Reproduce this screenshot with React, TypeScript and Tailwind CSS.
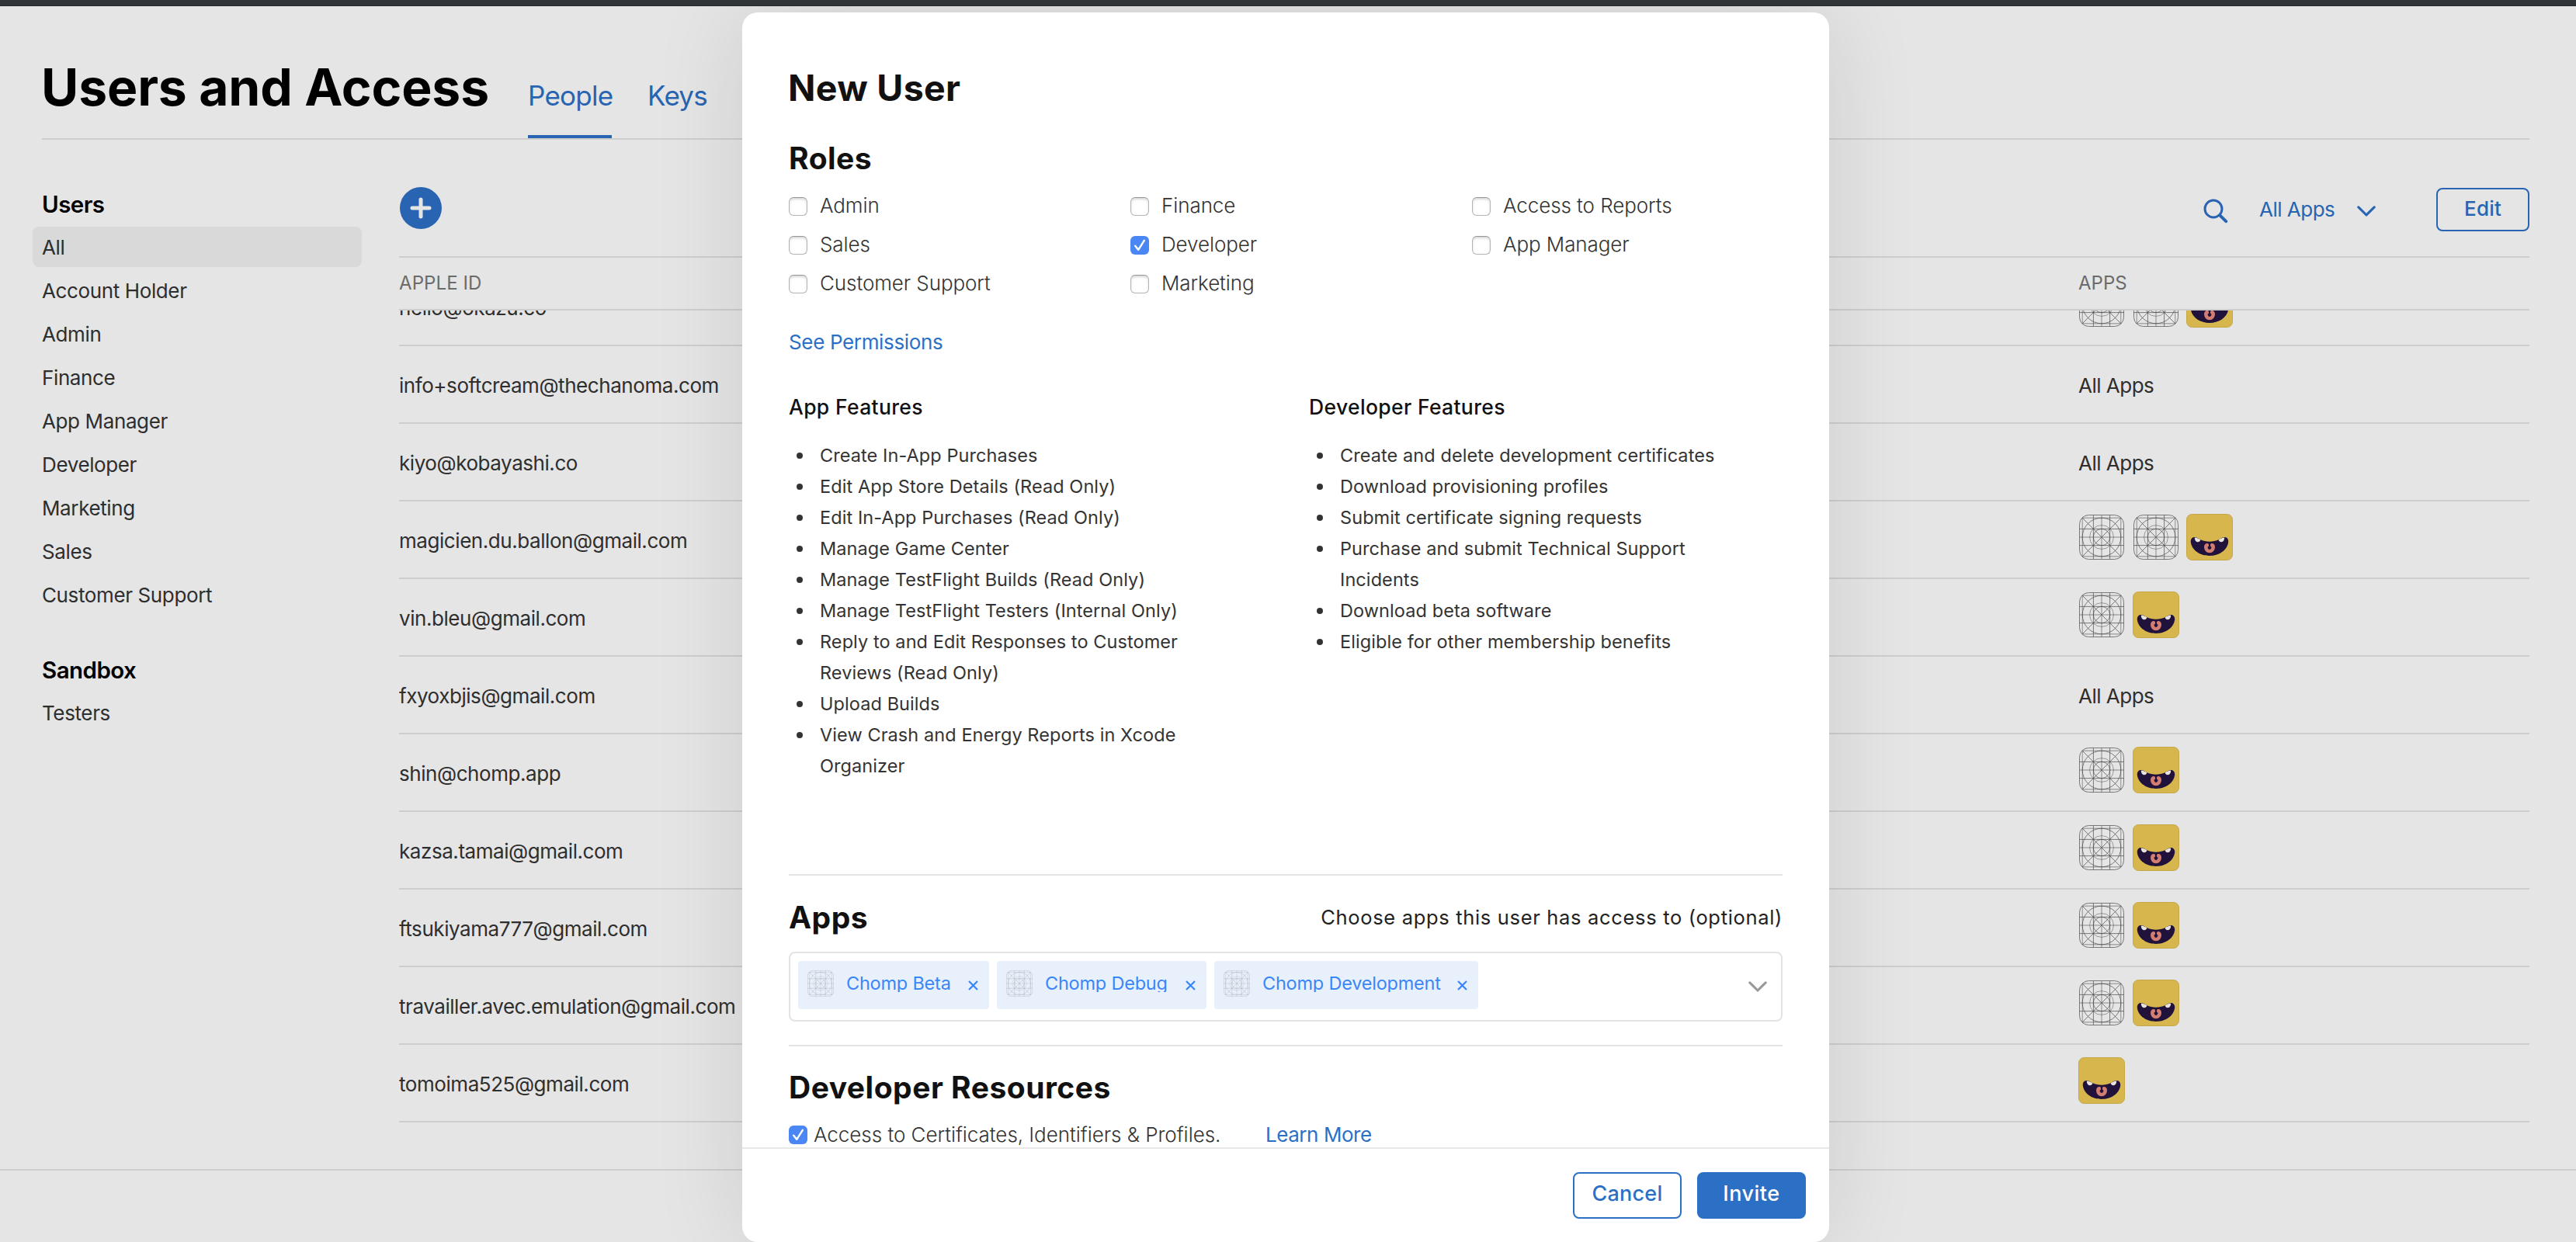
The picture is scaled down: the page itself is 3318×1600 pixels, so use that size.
import type { ReactNode } from 'react';

function GridIcon({ className }: { className: string }) {
  return (
    <svg viewBox="0 0 58 58" className={className} fill="none" stroke="#4a4a4a" strokeWidth="0.7">
      <rect x="0.5" y="0.5" width="57" height="57" rx="12" />
      <path d="M18.4 0.5v57M39.6 0.5v57M0.5 18.4h57M0.5 39.6h57" />
      <path d="M4.2 4.2l49.6 49.6M53.8 4.2L4.2 53.8" />
      <path d="M29 0.5v57M0.5 29h57" strokeWidth="1.5" strokeOpacity="0.4" />
      <path d="M4.3 4v50M53.7 4v50M4 4.3h50M4 53.7h50" strokeWidth="1.4" strokeOpacity="0.4" />
      <circle cx="29" cy="29" r="24.8" />
      <circle cx="29" cy="29" r="15.4" strokeOpacity="0.7" />
      <circle cx="29" cy="29" r="10.7" />
    </svg>
  );
}

function ChompIcon() {
  return (
    <svg viewBox="0 0 60 60" className="h-[60px] w-[60px]">
      <rect x="0.5" y="0.5" width="59" height="59" rx="7" fill="#d7b64e" stroke="#c5a649" />
      <path
        d="M10.5 30C7.3 30 5.5 33 5.8 36.3C7 47 18 54 30 54C42 54 53 47 54.2 36.3C54.5 33 52.7 30 49.5 30C46.3 30 44.5 31.8 42 33C34.5 36.6 25.5 36.6 18 33C15.5 31.8 13.7 30 10.5 30Z"
        fill="#20123a"
      />
      <path d="M10.8 30.5C13.6 30.3 15.7 31.9 18.4 33.3C18 35.2 16.6 36.3 14.9 36.3C12.4 36.3 10.8 33.8 10.8 30.5Z" fill="#e6e3e0" />
      <path d="M49.2 30.5C46.4 30.3 44.3 31.9 41.6 33.3C42 35.2 43.4 36.3 45.1 36.3C47.6 36.3 49.2 33.8 49.2 30.5Z" fill="#e6e3e0" />
      <path
        d="M27 38C24.6 38 23 39.8 23 42.5C23 47 26 50.2 30 50.2C34 50.2 37 47 37 42.5C37 39.8 35.4 38 33 38C31.9 38 31.2 38.6 31 39.6V41.6A2.2 2.2 0 1 1 29 41.6V39.6C28.8 38.6 28.1 38 27 38Z"
        fill="#d27d71"
      />
    </svg>
  );
}

function Chevron({ className }: { className: string }) {
  return (
    <svg viewBox="0 0 24 14" className={className} fill="none" stroke="currentColor" strokeWidth="3.1" strokeLinecap="round" strokeLinejoin="round">
      <path d="M1.8 1.8L12 12L22.2 1.8" />
    </svg>
  );
}

function Checkbox({ checked }: { checked?: boolean }) {
  if (checked) {
    return (
      <span className="flex h-6 w-6 shrink-0 items-center justify-center rounded-[6px] bg-[#4a86f4]">
        <svg viewBox="0 0 24 24" className="h-6 w-6" fill="none" stroke="#fff" strokeWidth="2.4" strokeLinecap="round" strokeLinejoin="round">
          <path d="M6.2 12.8L10.2 17.8L17.8 5.8" />
        </svg>
      </span>
    );
  }
  return (
    <span className="h-6 w-6 shrink-0 rounded-[6px] border border-[#b4b4b4] border-t-[#969696] bg-white shadow-[inset_0_2px_3px_rgba(0,0,0,0.16)]" />
  );
}

const users: { email: string; apps: string }[] = [
  { email: 'hello@okazu.co', apps: 'ggc' },
  { email: 'info+softcream@thechanoma.com', apps: 'all' },
  { email: 'kiyo@kobayashi.co', apps: 'all' },
  { email: 'magicien.du.ballon@gmail.com', apps: 'ggc' },
  { email: 'vin.bleu@gmail.com', apps: 'gc' },
  { email: 'fxyoxbjis@gmail.com', apps: 'all' },
  { email: 'shin@chomp.app', apps: 'gc' },
  { email: 'kazsa.tamai@gmail.com', apps: 'gc' },
  { email: 'ftsukiyama777@gmail.com', apps: 'gc' },
  { email: 'travailler.avec.emulation@gmail.com', apps: 'gc' },
  { email: 'tomoima525@gmail.com', apps: 'c' },
];

const sidebar = ['All', 'Account Holder', 'Admin', 'Finance', 'App Manager', 'Developer', 'Marketing', 'Sales', 'Customer Support'];

const roles: { name: string; checked?: boolean }[] = [
  { name: 'Admin' },
  { name: 'Finance' },
  { name: 'Access to Reports' },
  { name: 'Sales' },
  { name: 'Developer', checked: true },
  { name: 'App Manager' },
  { name: 'Customer Support' },
  { name: 'Marketing' },
];

const appFeatures = [
  'Create In-App Purchases',
  'Edit App Store Details (Read Only)',
  'Edit In-App Purchases (Read Only)',
  'Manage Game Center',
  'Manage TestFlight Builds (Read Only)',
  'Manage TestFlight Testers (Internal Only)',
  'Reply to and Edit Responses to Customer Reviews (Read Only)',
  'Upload Builds',
  'View Crash and Energy Reports in Xcode Organizer',
];

const developerFeatures = [
  'Create and delete development certificates',
  'Download provisioning profiles',
  'Submit certificate signing requests',
  'Purchase and submit Technical Support Incidents',
  'Download beta software',
  'Eligible for other membership benefits',
];

const chips = [
  { name: 'Chomp Beta', width: 'w-[246px]' },
  { name: 'Chomp Debug', width: 'w-[270px]' },
  { name: 'Chomp Development', width: 'w-[340px]' },
];

function SidebarItem({ label, active }: { label: string; active?: boolean }) {
  return (
    <li
      className={
        active
          ? 'h-[52px] rounded-lg bg-[#d9d9d9] pl-3 text-[26px] leading-[53px] tracking-[-0.38px] text-[#2e2e2e]'
          : 'h-[52px] pl-3 text-[26px] leading-[53px] tracking-[-0.38px] text-[#2e2e2e]'
      }
    >
      {label}
    </li>
  );
}

function UserRow({ email, apps }: { email: string; apps: string }) {
  return (
    <div className="flex h-[100px] shrink-0 border-b-2 border-[#cdcdcd] text-[26px] leading-[40px] text-[#2e2e2e]">
      <div className="w-[2163px] pt-[31px] tracking-[-0.44px]">{email}</div>
      {apps === 'all' ? (
        <div className="pt-[31px] tracking-[-0.5px]">All Apps</div>
      ) : (
        <div className="flex gap-[9.5px] pt-4">
          {apps.split('').map((kind, i) =>
            kind === 'g' ? (
              <span key={i} className="flex h-[60px] w-[60px] items-center justify-center">
                <GridIcon className="h-[58px] w-[58px]" />
              </span>
            ) : (
              <ChompIcon key={i} />
            ),
          )}
        </div>
      )}
    </div>
  );
}

function FeatureList({ title, items }: { title: string; items: string[] }) {
  return (
    <div>
      <h4 className="text-[26.5px] font-medium leading-[40px] tracking-[0.35px] text-[#111]">{title}</h4>
      <ul className="mt-[23px]">
        {items.map((item) => (
          <li key={item} className="flex">
            <span className="ml-[10px] mr-[22px] mt-4 h-2 w-2 shrink-0 rounded-full bg-[#333]" />
            <span className="w-[510px] text-[23.5px] leading-[40px] tracking-[0.08px] text-[#333]">{item}</span>
          </li>
        ))}
      </ul>
    </div>
  );
}

function SectionTitle({ children }: { children: ReactNode }) {
  return <h3 className="text-[39px] font-bold leading-[48px] tracking-[0.5px] text-[#111]">{children}</h3>;
}

export default function App() {
  return (
    <div className="relative flex h-[1600px] w-full flex-col overflow-hidden bg-[#e5e5e5] font-[Inter,'Liberation_Sans',sans-serif]">
      <div className="relative z-20 h-2 shrink-0 border-b border-[#24282a] bg-[#313538]" />

      <header className="ml-[54px] mr-[60px] flex h-[172px] shrink-0 items-start border-b-2 border-[#cdcdcd]">
        <h1 className="-ml-px mt-16 w-[627px] text-[66px] font-bold leading-[80px] tracking-[-0.15px] text-black">Users and Access</h1>
        <nav className="mt-[93px] flex h-[77px] gap-[46px] text-[35px] leading-[44px] tracking-[-0.75px] text-[#2864b1]">
          <a className="w-[108px] border-b-4 border-[#2864b1]">People</a>
          <a>Keys</a>
        </nav>
      </header>

      <main className="flex shrink-0">
        <aside className="ml-[42px] w-[424px] pt-[63px]">
          <h2 className="pl-3 text-[29.5px] font-semibold leading-[40px] tracking-[-0.55px] text-black">Users</h2>
          <ul className="mt-[9px] flex flex-col gap-1">
            {sidebar.map((label) => (
              <SidebarItem key={label} label={label} active={label === 'All'} />
            ))}
          </ul>
          <h2 className="mt-[51px] pl-3 text-[29.5px] font-semibold leading-[40px] tracking-[-0.55px] text-black">Sandbox</h2>
          <ul className="mt-[9px]">
            <SidebarItem label="Testers" />
          </ul>
        </aside>

        <section className="ml-12 mr-[60px] flex-1">
          <div className="flex h-[150px] items-start justify-between pt-[61px]">
            <button className="ml-px flex h-[54px] w-[54px] items-center justify-center rounded-full bg-[#2864b1]">
              <svg viewBox="0 0 28 28" className="h-7 w-7" stroke="#e5e5e5" strokeWidth="5" strokeLinecap="round">
                <path d="M14 3v22M3 14h22" />
              </svg>
            </button>
            <div className="flex h-[58px] items-center text-[#2864b1]">
              <svg viewBox="0 0 32 32" className="mr-[40px] mt-1 h-8 w-8" fill="none" stroke="currentColor" strokeLinecap="round">
                <circle cx="13" cy="13" r="11" strokeWidth="3" />
                <path d="M21.3 21.3L29.2 29.2" strokeWidth="4" />
              </svg>
              <span className="w-[126px] text-[26px] leading-[40px] tracking-[-0.5px]">All Apps</span>
              <Chevron className="mr-[78px] mt-1 h-[14px] w-6" />
              <button className="h-[56px] w-[120px] rounded-lg border-2 border-[#2864b1] pb-[3px] text-[26px] font-medium tracking-[0.2px]">
                Edit
              </button>
            </div>
          </div>

          <div className="flex h-[70px] border-y-2 border-[#cdcdcd] text-[24px] leading-[66px] text-[#6b6b6b]">
            <span className="w-[2163px] tracking-[0.1px]">APPLE ID</span>
            <span>APPS</span>
          </div>

          <div className="flex h-[1046px] flex-col justify-end overflow-hidden">
            {users.map((user) => (
              <UserRow key={user.email} email={user.email} apps={user.apps} />
            ))}
          </div>
        </section>
      </main>

      <footer className="mt-[60px] h-[94px] shrink-0 border-t-2 border-[#cdcdcd]" />

      <div className="absolute inset-0 z-10 flex justify-center pr-[6px] pt-4">
        <div className="flex h-[1584px] w-[1400px] flex-col overflow-hidden rounded-[20px] bg-white shadow-[0_0_120px_rgba(0,0,0,0.11)]">
          <div className="h-[1462px] overflow-hidden px-[60px] pt-[69px]">
            <h2 className="-ml-px text-[46.5px] font-bold leading-[56px] tracking-[0.31px] text-[#111]">New User</h2>

            <div className="mt-[39px]">
              <SectionTitle>Roles</SectionTitle>
            </div>
            <div className="mt-[13px] grid grid-cols-[440px_440px_400px]">
              {roles.map((role) => (
                <label key={role.name} className="flex h-[50px] items-center gap-4">
                  <Checkbox checked={role.checked} />
                  <span className="pb-[3px] text-[26px] font-light leading-[40px] tracking-[-0.08px] text-[#333]">{role.name}</span>
                </label>
              ))}
            </div>
            <a className="mt-[30px] block text-[26px] leading-[40px] tracking-[-0.35px] text-[#2c70c5]">See Permissions</a>

            <div className="mt-[43px] grid grid-cols-[670px_610px]">
              <FeatureList title="App Features" items={appFeatures} />
              <FeatureList title="Developer Features" items={developerFeatures} />
            </div>

            <div className="mt-[119px] flex items-center justify-between border-t-2 border-[#e3e3e3] pt-[30px]">
              <SectionTitle>Apps</SectionTitle>
              <p className="text-[25.5px] leading-[40px] tracking-[0.67px] text-[#222]">Choose apps this user has access to (optional)</p>
            </div>

            <div className="mt-5 flex h-[90px] items-center justify-between rounded-lg border-2 border-[#e3e3e3] pl-[10px] pr-[18px]">
              <div className="flex h-full gap-[10px] pt-[10px]">
                {chips.map((chip) => (
                  <div key={chip.name} className={`${chip.width} flex h-[62px] items-start rounded-[4px] bg-[#e8f1fb] pl-3 pr-[14px]`}>
                    <GridIcon className="mt-3 h-[34px] w-[34px] opacity-40" />
                    <span className="ml-4 mt-4 h-6 overflow-hidden whitespace-nowrap text-[23.5px] leading-[26px] tracking-[-0.22px] text-[#3a86f6]">
                      {chip.name}
                    </span>
                    <svg viewBox="0 0 13 13" className="ml-auto mt-[25px] h-[13px] w-[13px]" stroke="#3a86f6" strokeWidth="2.2">
                      <path d="M1 1l11 11M12 1L1 12" />
                    </svg>
                  </div>
                ))}
              </div>
              <Chevron className="h-[14px] w-6 text-[#999]" />
            </div>

            <div className="mt-[30px] border-t-2 border-[#e3e3e3] pt-[29px]">
              <SectionTitle>Developer Resources</SectionTitle>
            </div>
            <div className="mt-[17px] flex h-10 items-center text-[26px] leading-[40px]">
              <Checkbox checked />
              <span className="ml-2 w-[582px] font-light tracking-[-0.04px] text-[#333]">Access to Certificates, Identifiers &amp; Profiles.</span>
              <a className="tracking-[-0.45px] text-[#2c70c5]">Learn More</a>
            </div>
          </div>

          <div className="flex h-[122px] justify-end gap-5 border-t-2 border-[#e8e8e8] pr-[30px] pt-[30px] text-[27px] font-medium">
            <button className="h-[60px] w-[140px] rounded-lg border-2 border-[#2c70c5] pb-[3px] tracking-[0.2px] text-[#2c70c5]">Cancel</button>
            <button className="h-[60px] w-[140px] rounded-lg bg-[#2c70c5] pb-[3px] tracking-[0.5px] text-white">Invite</button>
          </div>
        </div>
      </div>
    </div>
  );
}
